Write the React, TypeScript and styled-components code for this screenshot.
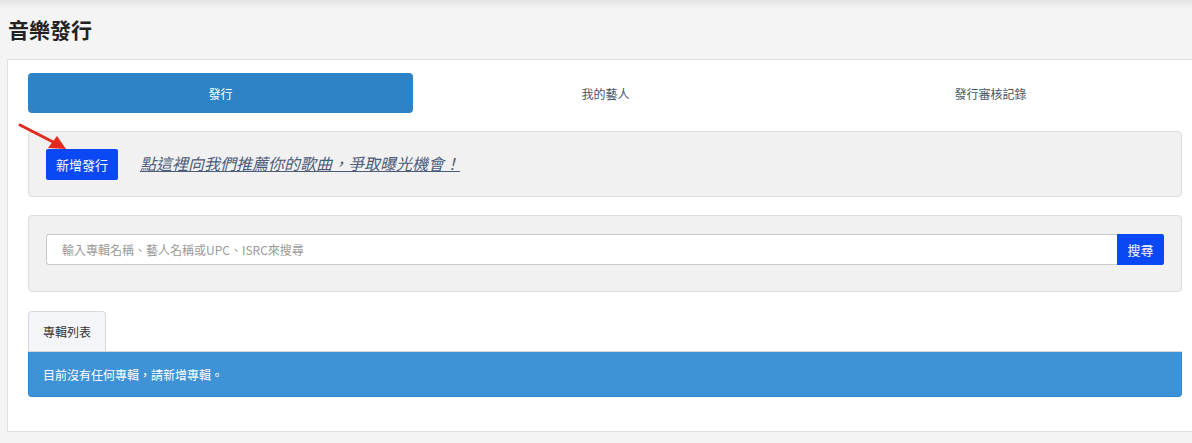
import React from "react";
import styled, { createGlobalStyle } from "styled-components";

const Global = createGlobalStyle`
  html, body { margin: 0; padding: 0; }
  body {
    background: #f4f4f4;
    font-family: "Noto Sans", "Noto Sans CJK TC", sans-serif;
    overflow: hidden;
  }
`;

const Page = styled.div`
  position: relative;
  width: 1192px;
  height: 443px;
  overflow: hidden;
  background: #f4f4f4;
  &::before {
    content: "";
    position: absolute;
    left: 0; right: 0; top: 0;
    height: 8px;
    background: linear-gradient(#e4e4e4, rgba(244,244,244,0));
  }
`;

const Title = styled.h1`
  margin: 0;
  padding: 15px 0 0 8px;
  height: 59px;
  box-sizing: border-box;
  font-size: 21px;
  line-height: 28px;
  font-weight: 700;
  color: #222;
  font-family: "Noto Sans CJK TC", sans-serif;
`;

const Panel = styled.div`
  margin-left: 7px;
  width: 1196px;
  box-sizing: border-box;
  background: #fff;
  border: 1px solid #e0e0e0;
  padding: 13px 20px 34px 20px;
  display: flex;
  flex-direction: column;
`;

const TopTabs = styled.div`
  display: grid;
  grid-template-columns: repeat(3, 385px);
  height: 40px;
`;

const TopTab = styled.div<{ $active?: boolean }>`
  display: flex;
  align-items: center;
  justify-content: center;
  border-radius: 4px;
  font-size: 12px;
  color: ${(p) => (p.$active ? "#fff" : "#44546a")};
  background: ${(p) => (p.$active ? "#2d83c6" : "transparent")};
  font-family: "Noto Sans CJK TC", sans-serif;
`;

const Well = styled.div<{ $h: number; $mt: number }>`
  margin-top: ${(p) => p.$mt}px;
  width: 1154px;
  height: ${(p) => p.$h}px;
  box-sizing: border-box;
  background: #f1f1f1;
  border: 1px solid #dcdcdc;
  border-radius: 4px;
  padding: 0 17px;
  display: flex;
  align-items: center;
  position: relative;
`;

const PrimaryButton = styled.button`
  height: 31px;
  padding: 0 10px;
  border: none;
  border-radius: 2px;
  background: #0a48f6;
  color: #fff;
  font-size: 13px;
  font-family: "Noto Sans CJK TC", sans-serif;
  cursor: pointer;
`;

const PromoLink = styled.a`
  margin-left: 22px;
  margin-top: -2px;
  font-size: 16px;
  font-style: italic;
  text-decoration: underline;
  color: #4b5c7b;
  font-family: "Noto Sans CJK TC", sans-serif;
`;

const Arrow = styled.svg`
  position: absolute;
  left: -12px;
  top: -9px;
  overflow: visible;
`;

const SearchRow = styled.div`
  display: flex;
  width: 1118px;
  height: 31px;
  margin-top: -9px;
`;

const SearchInput = styled.input`
  flex: 1;
  box-sizing: border-box;
  height: 31px;
  border: 1px solid #c6cbd0;
  border-right: none;
  border-radius: 3px 0 0 3px;
  padding: 0 15px;
  font-size: 12px;
  font-family: "Noto Sans CJK TC", sans-serif;
  outline: none;
  &::placeholder { color: #9a9a9a; }
`;

const SearchButton = styled.button`
  width: 47px;
  height: 31px;
  border: none;
  border-radius: 0 2px 2px 0;
  background: #0a48f6;
  color: #fff;
  font-size: 13px;
  font-family: "Noto Sans CJK TC", sans-serif;
`;

const SubTabs = styled.div`
  margin-top: 19px;
  display: flex;
  border-bottom: 1px solid #d6d6d6;
`;

const SubTab = styled.div`
  width: 78px;
  height: 40px;
  box-sizing: border-box;
  background: #f3f5f8;
  border: 1px solid #d8d8d8;
  border-bottom: none;
  border-radius: 4px 4px 0 0;
  display: flex;
  align-items: center;
  justify-content: center;
  font-size: 12px;
  color: #333;
  font-family: "Noto Sans CJK TC", sans-serif;
`;

const Alert = styled.div`
  height: 45px;
  box-sizing: border-box;
  background: #3e93d6;
  border: 1px solid #2f86cc;
  border-top: none;
  border-radius: 0 0 4px 4px;
  padding: 0 14px;
  display: flex;
  align-items: center;
  font-size: 12px;
  color: #fff;
  font-family: "Noto Sans CJK TC", sans-serif;
`;

export default function App() {
  return (
    <Page>
      <Global />
      <Title>音樂發行</Title>
      <Panel>
        <TopTabs>
          <TopTab $active>發行</TopTab>
          <TopTab>我的藝人</TopTab>
          <TopTab>發行審核記錄</TopTab>
        </TopTabs>
        <Well $h={66} $mt={18}>
          <Arrow width="60" height="40" viewBox="0 0 60 40">
            <line x1="3" y1="2" x2="38" y2="20" stroke="#e2291d" strokeWidth="3" strokeLinecap="round" />
            <polygon points="49,26 31,25 40,13" fill="#e2291d" />
          </Arrow>
          <PrimaryButton>新增發行</PrimaryButton>
          <PromoLink>點這裡向我們推薦你的歌曲，爭取曝光機會！</PromoLink>
        </Well>
        <Well $h={77} $mt={18}>
          <SearchRow>
            <SearchInput placeholder="輸入專輯名稱、藝人名稱或UPC、ISRC來搜尋" />
            <SearchButton>搜尋</SearchButton>
          </SearchRow>
        </Well>
        <SubTabs>
          <SubTab>專輯列表</SubTab>
        </SubTabs>
        <Alert>目前沒有任何專輯，請新增專輯。</Alert>
      </Panel>
    </Page>
  );
}
